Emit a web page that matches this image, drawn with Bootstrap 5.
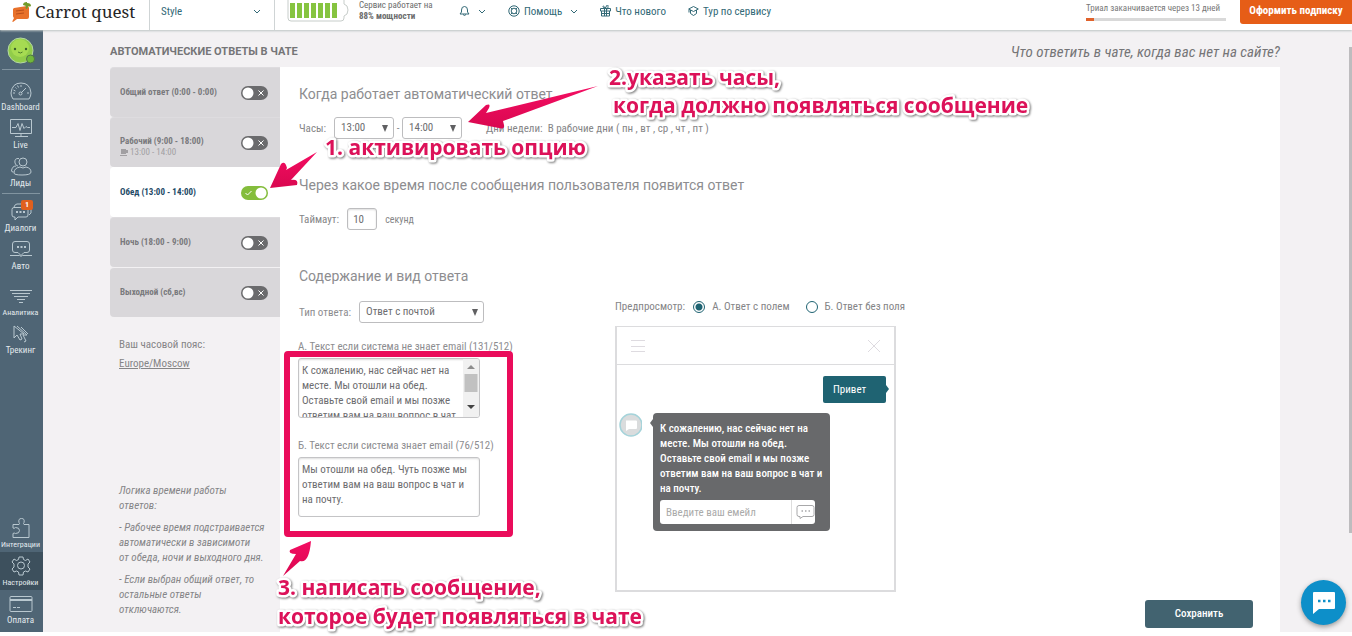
<!DOCTYPE html>
<html lang="ru">
<head>
<meta charset="utf-8">
<meta name="viewport" content="width=device-width, initial-scale=1">
<title>Carrot quest — Автоматические ответы</title>
<link href="https://cdn.jsdelivr.net/npm/bootstrap@5.3.0/dist/css/bootstrap.min.css" rel="stylesheet">
<style>
body{font-family:"Roboto Condensed",Roboto,"Noto Sans",sans-serif;font-size:11px;line-height:15px;color:#858587;background:#fff;min-height:100vh;padding-bottom:4px;overflow:hidden}
a{text-decoration:none;color:inherit}
svg{display:block;flex:none}
.line-icon{fill:none;stroke:currentColor;stroke-width:1}
/* top bar */
.topbar{height:30px;padding-bottom:8px;background:#fff;box-shadow:0 1px 2px #bcc3c4;position:relative;z-index:2;color:#326976}
.top-link{margin-left:22px}
.brand-cell{width:150px;height:30px;padding:0 0 6px 11px;margin-bottom:-8px;border-right:1px solid #cfd4d5}
.brand-name{font:17px/24px "Noto Serif","DejaVu Serif",serif;margin-left:2px;color:#262626}
.app-cell{width:125px;height:30px;padding:0 13px 8px 11px;margin-bottom:-8px;border-right:1px solid #cfd4d5}
.status-text{width:88px;padding-left:10px;font-size:9px;line-height:11px;color:#6c6c6c}
.trial-box{width:140px;font-size:9px;line-height:13px;color:#777;margin-right:14px}
.trial-box .progress{height:3px;border-radius:0;background:#d9d9d9;margin-top:3px}
.trial-box .progress-bar{background:#e0622b}
.btn-sub{height:26px;width:112px;border:0;border-radius:0 0 0 3px;background:#e65d17;color:#fff;font-size:11px;font-weight:700;padding:0;line-height:14px}
/* sidebar */
.sidebar{width:43px;background:#4f6575;color:#e3eaee;padding:7px 0 4px}
.side-link{height:38px;width:41px;padding-top:2px;font-size:9px;line-height:11px;position:relative}
.side-link.long-name{font-size:8px}
.side-link .line-icon{stroke:#b9c8d0}
.side-link.current{background:#3d505d;width:43px;padding-right:2px}
.side-rule{height:1px;width:38px;margin:4px 0 7px 2px;background:#8194a0}
.side-rule.tight{margin:2px 0 4px 2px}
.count{position:absolute;top:2px;right:8px;width:12px;height:10px;border-radius:2px;background:#e0601e;color:#fff;font-size:8px;line-height:10px;font-weight:700;text-align:center}
/* page */
.page-area{background:#f3f1f3;padding:15px 72px 0 67px}
.page-title{font:700 11px/14px Roboto,sans-serif;color:#757577;margin:0}
.page-hint{font-size:15px;line-height:14px;font-style:italic;color:#757577}
.tabs-col{width:170px}
.tab-row{height:50px;padding:0 12px 0 10px;background:#d9d7da;font-size:9px;line-height:11px;font-weight:700;color:#7a7a7d;border-radius:4px 0 0 4px;border-top:1px solid #dedcdf}
.tab-row small{display:block;font-size:9px;line-height:11px;color:#a19fa2;font-weight:400}
.tab-row small svg{display:inline-block;vertical-align:-1px}
.tab-row.chosen{background:#fff;border-color:#fff;color:#1e4a66}
.tab-row.split{border-top-color:#f3f1f3}
.form-check-input.toggle{width:27px;height:14px;margin:0;border:0;border-radius:7px;background:#6b6b6d url("data:image/svg+xml,%3Csvg xmlns='http://www.w3.org/2000/svg' viewBox='0 0 27 14'%3E%3Ccircle cx='7' cy='7' r='5.5' fill='%23fff'/%3E%3Cpath d='M17.500 4.500l5 5m0-5l-5 5' stroke='%23fff' fill='none'/%3E%3C/svg%3E") no-repeat center/27px 14px}
.form-check-input.toggle:checked{background-color:#84bd3c;background-image:url("data:image/svg+xml,%3Csvg xmlns='http://www.w3.org/2000/svg' viewBox='0 0 27 14'%3E%3Ccircle cx='20' cy='7' r='5.500' fill='%23fff'/%3E%3Cpath d='M4.500 7l2 2l4-4' stroke='%23fff' fill='none'/%3E%3C/svg%3E")}
.side-notes{padding:20px 0 0 9px}
.logic-notes{margin-top:112px;font-style:italic}
.logic-notes p{margin:0 0 7px}
.panel{background:#fff;padding:18px 27px 0 19px}
.panel h2{font:400 14px/18px Roboto,sans-serif;color:#8d8d90;margin:0 0 14px}
.panel h2.next-step{margin-top:37px}
.form-select.pick{height:22px;padding:0 18px 0 6px;font-size:11px;line-height:20px;border:1px solid #bdbdbf;border-radius:3px;color:#6d6d70;background:#fff url("data:image/svg+xml,%3Csvg xmlns='http://www.w3.org/2000/svg' viewBox='0 0 6 7'%3E%3Cpath d='M0 0h6L3 7z' fill='%23606062'/%3E%3C/svg%3E") no-repeat right 5px center/6px 7px}
.form-select.hour-pick{width:60px}
.form-select.type-pick{width:125px}
.dash-sep{width:8px;text-align:center}
.form-control.secs{width:30px;height:22px;padding:0 5px;font-size:11px;border:1px solid #bdbdbf;border-radius:3px;color:#6d6d70;box-shadow:inset 0 1px 2px #ddd}
.unit{font-size:10px}
.text-frame{width:182px;height:60px;border:1px solid #c4c4c6;border-radius:3px;overflow:hidden;box-shadow:inset 0 1px 2px #ddd}
.text-frame textarea{border:0;resize:none;background:transparent;padding:4px 0 0 3px;font-size:11px;line-height:15px;color:#6d6d70;overflow:hidden;border-radius:0;min-height:0;height:58px}
.fields-col{width:317px;margin-left:-1px}
.fields-col label{color:#8d8d90}
.kind-row{padding:2px 0 0 1px}
.radio-dot.form-check-input{width:12px;height:12px;margin:0 7px 0 0;border:1px solid #1f6372;background:#fff}
.radio-dot.form-check-input:checked{background:radial-gradient(circle,#1f6372 0 3px,#fff 4px)}
.preview{width:281px;height:266px;border:1px solid #dcdcde;border-width:1px 2px 2px;margin-top:12px}
.preview-top{height:38px;padding:0 13px 0 14px;border-bottom:1px solid #dcdcde;color:#dedbe0}
.bubble-me{width:63px;height:27px;margin:11px 8px 10px auto;border-radius:2px;background:#1f6372;color:#fff;font-size:11px;line-height:27px;padding-left:10px;position:relative}
.bubble-me::after{content:"";position:absolute;left:100%;top:9px;border:4px solid transparent;border-left:3px solid #1f6372;border-right:0}
.bubble-bot{width:177px;height:118px;margin-left:11px;border-radius:4px;background:#68696b;color:#fff;padding:8px 7px 6px;font-weight:500;position:relative}
.bubble-bot::before{content:"";position:absolute;right:100%;top:6px;border:4px solid transparent;border-right:3px solid #68696b;border-left:0}
.mail-group{width:155px;height:24px;margin-top:4px}
.mail-group .form-control{height:24px;min-height:0;border:0;font-size:11px;padding:0 6px;border-radius:3px 0 0 3px}
.mail-group .form-control::placeholder{color:#aaa}
.mail-group .btn{height:24px;width:28px;padding:0 0 0 4px;background:#fff;border:0;border-left:1px solid #ddd;border-radius:0 3px 3px 0;color:#a8a8aa}
.btn-save{width:108px;height:28px;padding:0;border:0;border-radius:3px;background:#426370;color:#fff;font-size:11px;font-weight:500}
.btn-save:hover{background:#36535f;color:#fff}
/* floating layers */
.marks{position:absolute;left:0;top:0;pointer-events:none;overflow:visible;z-index:3}
.marks text{font:700 21px "Open Sans","Noto Sans",sans-serif;fill:#dc1259;stroke:#fff;stroke-width:5px;stroke-linejoin:round;paint-order:stroke;filter:drop-shadow(1px 1px 1px #777)}
.chat-fab{position:absolute;right:6px;bottom:7px;width:45px;height:45px;padding:0 0 0 11px;border:0;border-radius:50%;background:#0d8fc9;box-shadow:0 2px 5px #999}
.scroll-mark{position:absolute;right:0;top:17px;width:3px;height:486px;background:#bdbcbe}
</style>
</head>
<body class="d-flex flex-column">
<header class="topbar d-flex align-items-center">
  <a href="#" class="brand-cell d-flex align-items-center">
    <svg width="22" height="24" viewBox="0 0 22 24"><path d="M3 8l13-2q2 0 2 2v9q0 2-2 2H6l-4 3q-1 0-.5-1L3 18q-1-1-1-2V9z" fill="#e8712a"/><path d="M5 11l8-1M5 14l8-1" stroke="#b94e1a"/><path d="M12 5q0-3 4-3 0 1 0 1 4 0 4 3-2 1-3 0 0 3-2 3-1-2 0-3z" fill="#749b2a"/></svg>
    <span class="brand-name text-nowrap">Carrot quest</span>
  </a>
  <a href="#" class="app-cell d-flex align-items-center justify-content-between"><span>Style</span>
    <svg class="line-icon" width="8" height="5" viewBox="0 0 8 5"><path d="M1 1l3 3l3-3"/></svg></a>
  <svg width="74" height="22" viewBox="-13 0 74 22"><path d="M0 0v18q0 3 3 3h50q3 0 3-3v-2q4-1 4-6t-4-6V0" fill="#fff" stroke="#c7cdca"/><path d="M4.500 3v15M11.500 3v15M18.500 3v15M25.500 3v15M32.500 3v15M39.500 3v15M46.500 3v15" stroke="#86c440" stroke-width="5"/></svg>
  <div class="status-text text-nowrap">Сервис работает на<br><strong>88% мощности</strong></div>
  <a href="#" class="top-link d-flex align-items-center gap-2" aria-label="Уведомления">
    <svg class="line-icon" width="11" height="12" viewBox="0 0 11 12"><path d="M1 9h9L8.500 7V5q0-3.500-3-3.500T2.500 5v2zM4 9.500q1.500 2 3 0"/></svg>
    <svg class="line-icon" width="8" height="5" viewBox="0 0 8 5"><path d="M1 1l3 3l3-3"/></svg></a>
  <a href="#" class="top-link d-flex align-items-center gap-1 text-nowrap">
    <svg class="line-icon" width="12" height="12" viewBox="0 0 12 12"><circle cx="6" cy="6" r="5.200"/><circle cx="6" cy="6" r="2.800"/><path d="M2.300 2.300l2 2M9.700 2.300l-2 2M2.300 9.700l2-2M9.700 9.700l-2-2"/></svg>
    Помощь <svg class="line-icon ms-1" width="8" height="5" viewBox="0 0 8 5"><path d="M1 1l3 3l3-3"/></svg></a>
  <a href="#" class="top-link d-flex align-items-center gap-1 text-nowrap">
    <svg class="line-icon" width="11" height="12" viewBox="0 0 11 12"><path d="M.5 3.500h10v2.500h-10zM1.500 6v5h8V6M4.500 3.500V11M6.500 3.500V11M5.500 3Q3 3 3 1.500T5.500 3 8 1.500 5.500 3M2 8.500h7"/></svg>
    Что нового</a>
  <a href="#" class="top-link d-flex align-items-center gap-1 text-nowrap">
    <svg class="line-icon" width="11" height="12" viewBox="0 0 11 12"><path d="M.7 4L5.500 1.500 10.300 4 5.500 6.500zM2.500 5v3.500l3 2 3-2V5M1 4.500v3"/></svg>
    Тур по сервису</a>
  <div class="trial-box ms-auto text-nowrap">Триал заканчивается через 13 дней
    <div class="progress"><div class="progress-bar" style="width:6%"></div></div>
  </div>
  <button class="btn btn-sub text-nowrap">Оформить подписку</button>
</header>

<div class="d-flex flex-grow-1 position-relative">
  <nav class="sidebar d-flex flex-column">
    <svg width="41" height="28" viewBox="0 0 41 28"><circle cx="20.500" cy="13.500" r="12.500" fill="#91cc4a" stroke="#b5d8a3"/><circle cx="20" cy="11" r="9" fill="#a6db52"/><circle cx="15" cy="12" r="1.200" fill="#3b622a"/><circle cx="26" cy="12" r="1.200" fill="#3b622a"/><path d="M18 15q2.500 2 4.500 0" fill="none" stroke="#4d7e2c"/><circle cx="30.500" cy="22" r="4" fill="#71b83a" stroke="#4f7348"/></svg>
    <div class="side-rule"></div>
    <a href="#" class="side-link d-flex flex-column align-items-center"><svg class="line-icon" width="24" height="23" viewBox="0 0 24 23"><path d="M4 20q-2-3-2-6Q3 4 12 4t10 10q0 3-2 6zM12 14l5-5M4 14h2M18 14h2M12 6v2M6.500 8.500l1 1M8.500 6.500l1 2M4.500 11l2 1"/><circle cx="11.500" cy="14.500" r="1.500"/></svg>Dashboard</a>
    <a href="#" class="side-link d-flex flex-column align-items-center"><svg class="line-icon" width="24" height="23" viewBox="0 0 24 23"><path d="M1.500 2.500h21v14h-21zM12 17v2M6 19.500h13M3 10.500h4l2-4 2 7 2-7 2 5 2-2 1.500 1h2.500"/></svg>Live</a>
    <a href="#" class="side-link d-flex flex-column align-items-center"><svg class="line-icon" width="24" height="23" viewBox="0 0 24 23"><circle cx="14" cy="7" r="4"/><path d="M11 12q-6 1-6 6 0 2 8 2 9 0 9-3 0-4-5-5-3 2-6 0zM10 3.500Q5 3 6 8q1 3 3 3M7 11q-4 0-4.500 5 0 1 2 1"/></svg>Лиды</a>
    <div class="side-rule tight"></div>
    <a href="#" class="side-link d-flex flex-column align-items-center"><svg class="line-icon" width="24" height="23" viewBox="0 0 24 23"><path d="M5 7.500h12q2 0 2 2V15q0 2-2 2H9l-3 3v-3H5q-2 0-2-2V9.500q0-2 2-2zM5 7q1-3 3-3h12q2 0 2 2v7l-2 2"/><path d="M7 12h2M10.500 12h2M14 12h2" stroke-width="2"/></svg>Диалоги<span class="count">1</span></a>
    <a href="#" class="side-link d-flex flex-column align-items-center"><svg class="line-icon" width="24" height="23" viewBox="0 0 24 23"><path d="M6 3.500h12q2.500 0 2.500 2.500v6q0 2.500-2.500 2.500h-3l-3 3-3-3H6Q3.500 14.500 3.500 12V6Q3.500 3.500 6 3.500zM1 17.500h9.500q1.500 1.500 3 0H23"/><path d="M8 9h2M11.500 9h2M15 9h2" stroke-width="2"/></svg>Авто</a>
    <a href="#" class="side-link long-name d-flex flex-column align-items-center mt-2"><svg class="line-icon" width="24" height="23" viewBox="0 0 24 23"><path d="M1 6.500h22M3 9.500h18M5 12.500h14M8 15.500h8M10 18.500h4"/></svg>Аналитика</a>
    <a href="#" class="side-link d-flex flex-column align-items-center"><svg class="line-icon" width="24" height="23" viewBox="0 0 24 23"><path d="M5 4v12l3-3 3 5 2-1-2-5h4zM8 4l10 9h-4l3 6-2 1M12 5l7 7"/></svg>Трекинг</a>
    <a href="#" class="side-link long-name d-flex flex-column align-items-center mt-auto"><svg class="line-icon" width="24" height="23" viewBox="0 0 24 23"><path d="M4 8.500h6q1-1 0-2-1-4 2.500-4t2.500 4q-1 1 0 2h5v13H4v-4q1-1 2.500 0 4 0 4-3t-4-3Q5 13 4 12z"/></svg>Интеграции</a>
    <a href="#" class="side-link long-name current d-flex flex-column align-items-center"><svg class="line-icon" width="24" height="23" viewBox="0 0 24 23"><path d="M10 3h4l.5 2.500 2 1L19 5l2 3-2 2v3l2 2-2 3-2.500-1-2 1-.5 3h-4l-.5-3-2-1L5 18l-2-3 2-2v-3L3 8l2-3 2.500 1.500 2-1z"/><circle cx="12" cy="11.500" r="3.500"/></svg>Настройки</a>
    <a href="#" class="side-link d-flex flex-column align-items-center"><svg class="line-icon" width="24" height="23" viewBox="0 0 24 23"><path d="M2 4.500h20q1 0 1 1v13q0 1-1 1H2q-1 0-1-1v-13q0-1 1-1zM1 8.500h22M4 15.500h3M8 15.500h3M1 7.500h22"/></svg>Оплата</a>
  </nav>

  <main class="page-area flex-grow-1 d-flex flex-column">
    <div class="d-flex justify-content-between mb-2">
      <h1 class="page-title">АВТОМАТИЧЕСКИЕ ОТВЕТЫ В ЧАТЕ</h1>
      <div class="page-hint">Что ответить в чате, когда вас нет на сайте?</div>
    </div>
    <div class="d-flex flex-grow-1">
      <div class="tabs-col flex-shrink-0">
        <div class="tab-row d-flex align-items-center justify-content-between"><label for="t1">Общий ответ (0:00 - 0:00)</label><input id="t1" type="checkbox" class="form-check-input toggle"></div>
        <div class="tab-row d-flex align-items-center justify-content-between"><label for="t2" class="pt-2">Рабочий (9:00 - 18:00)<small><svg width="8" height="7" viewBox="0 0 8 7"><path d="M1 0h5v1h2v3H6v1H1zM0 6h7v1H0z" fill="#a19fa2"/></svg> 13:00 - 14:00</small></label><input id="t2" type="checkbox" class="form-check-input toggle"></div>
        <div class="tab-row chosen d-flex align-items-center justify-content-between"><label for="t3">Обед (13:00 - 14:00)</label><input id="t3" type="checkbox" class="form-check-input toggle" checked></div>
        <div class="tab-row d-flex align-items-center justify-content-between"><label for="t4">Ночь (18:00 - 9:00)</label><input id="t4" type="checkbox" class="form-check-input toggle"></div>
        <div class="tab-row split d-flex align-items-center justify-content-between"><label for="t5">Выходной (сб,вс)</label><input id="t5" type="checkbox" class="form-check-input toggle"></div>
        <div class="side-notes">
          <div>Ваш часовой пояс:</div>
          <a href="#" class="d-inline-block mt-1 text-decoration-underline">Europe/Moscow</a>
          <div class="logic-notes text-nowrap">
            <p>Логика времени работы<br>ответов:</p>
            <p>- Рабочее время подстраивается<br>автоматически в зависимоти<br>от обеда, ночи и выходного дня.</p>
            <p class="mb-0">- Если выбран общий ответ, то<br>остальные ответы<br>отключаются.</p>
          </div>
        </div>
      </div>
      <section class="panel flex-grow-1 d-flex flex-column">
        <h2>Когда работает автоматический ответ</h2>
        <div class="d-flex align-items-center">
          <label for="h1" class="me-2">Часы:</label>
          <select id="h1" class="form-select pick hour-pick"><option>13:00</option></select><span class="dash-sep">-</span>
          <select class="form-select pick hour-pick" aria-label="До"><option>14:00</option></select>
          <span class="ms-4 text-nowrap">Дни недели: &nbsp;В рабочие дни ( пн , вт , ср , чт , пт )</span>
        </div>
        <h2 class="next-step">Через какое время после сообщения пользователя появится ответ</h2>
        <div class="d-flex align-items-center">
          <label for="secs" class="me-2">Таймаут:</label><input id="secs" class="form-control secs" value="10"><span class="unit ms-2">секунд</span>
        </div>
        <h2 class="next-step">Содержание и вид ответа</h2>
        <div class="d-flex">
          <div class="fields-col flex-shrink-0">
            <div class="kind-row d-flex align-items-center mb-3">
              <label for="kind" class="me-2">Тип ответа:</label>
              <select id="kind" class="form-select pick type-pick"><option>Ответ с почтой</option></select>
            </div>
            <label for="ta" class="text-nowrap d-block">А. Текст если система не знает email (131/512)</label>
            <div class="text-frame d-flex mt-1">
              <textarea id="ta" class="form-control shadow-none">К сожалению, нас сейчас нет на
месте. Мы отошли на обед.
Оставьте свой email и мы позже
ответим вам на ваш вопрос в чат
и на почту.</textarea>
              <svg width="16" height="58" viewBox="0 0 16 58"><path d="M0 0h16v58H0z" fill="#f1f1f1"/><path d="M8 6l4 4H4z" fill="#8d8d8d"/><path d="M1.500 15h13v18h-13z" fill="#c1c1c1"/><path d="M4 46h8l-4 4z" fill="#444"/></svg>
            </div>
            <label for="tb" class="text-nowrap d-block mt-3 pt-1">Б. Текст если система знает email (76/512)</label>
            <div class="text-frame d-flex mt-1">
              <textarea id="tb" class="form-control shadow-none">Мы отошли на обед. Чуть позже мы
ответим вам на ваш вопрос в чат и
на почту.</textarea>
            </div>
          </div>
          <div class="flex-shrink-0">
            <div class="d-flex align-items-center text-nowrap">
              <span class="me-2">Предпросмотр:</span>
              <input type="radio" name="view" id="va" class="form-check-input radio-dot" checked><label for="va" class="me-3">А. Ответ с полем</label>
              <input type="radio" name="view" id="vb" class="form-check-input radio-dot"><label for="vb">Б. Ответ без поля</label>
            </div>
            <div class="preview">
              <div class="preview-top d-flex align-items-center justify-content-between">
                <svg class="line-icon" width="14" height="14" viewBox="0 0 14 14"><path d="M0 1.500h14M0 7.500h14M0 12.500h14"/></svg>
                <svg class="line-icon" width="14" height="14" viewBox="0 0 14 14"><path d="M1 1l12 12M13 1L1 13"/></svg>
              </div>
              <div class="bubble-me">Привет</div>
              <div class="d-flex align-items-start">
                <svg width="25" height="24" viewBox="0 0 25 24"><circle cx="14" cy="12" r="11" fill="#dadcdd" stroke="#a5d3da" stroke-width="1.500"/><path d="M9 7.500h10q1 0 1 1V15q0 1-1 1h-7l-3 2z" fill="#fff"/></svg>
                <div class="bubble-bot text-nowrap">К сожалению, нас сейчас нет на<br>месте. Мы отошли на обед.<br>Оставьте свой email и мы позже<br>ответим вам на ваш вопрос в чат и<br>на почту.
                  <div class="mail-group d-flex"><input class="form-control" placeholder="Введите ваш емейл" aria-label="Email"><button class="btn" aria-label="Отправить"><svg class="line-icon" width="19" height="16" viewBox="0 0 19 16"><path d="M3 1.500h13q2 0 2 2v7q0 2-2 2H7l-3 2v-2H3q-2 0-2-2v-7q0-2 2-2z"/><path d="M5.500 7h1.500M9 7h1.500M12.500 7H14" stroke-width="1.500"/></svg></button></div>
                </div>
              </div>
            </div>
          </div>
        </div>
        <button class="btn btn-save mt-2 ms-auto">Сохранить</button>
      </section>
    </div>
  </main>
  <svg class="marks" width="1060" height="602" viewBox="0 30 1060 602">
    <defs><linearGradient id="pink" x1="0" y1="0" x2="0" y2="1"><stop offset="0" stop-color="#f40d62"/><stop offset="1" stop-color="#d90850"/></linearGradient></defs>
    <rect x="287" y="354" width="223" height="180" rx="1" fill="none" stroke="#ea0c5b" stroke-width="6"/>
    <g fill="url(#pink)">
      <path d="M598 86L503 121L504 125Q505 130 499 128L468 122L486 105Q491 103 489 108L486 113Z"/>
      <path d="M317 152L291 180Q299 179 297 185L270 188L281 164Q285 160 287 168L286 170Z"/>
      <path d="M283 576L300 561Q309 564 311 541L290 550Q288 554 296 554Z"/>
    </g>
    <text x="325" y="155">1. активировать опцию</text>
    <text x="609" y="85">2.указать часы,</text>
    <text x="613" y="113">когда должно появляться сообщение</text>
    <text x="278" y="595">3. написать сообщение,</text>
    <text x="278" y="624">которое будет появляться в чате</text>
  </svg>
  <div class="scroll-mark"></div>
  <button class="chat-fab" aria-label="Открыть чат"><svg width="24" height="24" viewBox="0 0 24 24"><path d="M2 1h20q1 0 1 1v15q0 1-1 1H7l-6 5V2q0-1 1-1z" fill="#fff"/><path d="M6 10h2.500M11 10h2.500M16 10h2.500" stroke="#0d8fc9" stroke-width="2.500"/></svg></button>
</div>
<script src="https://cdn.jsdelivr.net/npm/bootstrap@5.3.0/dist/js/bootstrap.bundle.min.js"></script>
</body>
</html>
